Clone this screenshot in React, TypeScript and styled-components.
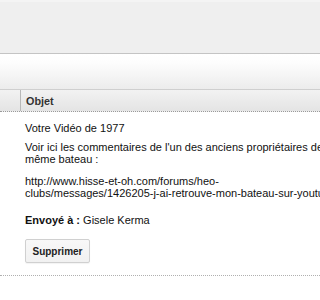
import React from "react";
import styled, { createGlobalStyle } from "styled-components";

const GlobalStyle = createGlobalStyle`
  html, body {
    margin: 0;
    padding: 0;
    background: #fff;
    font-family: "Liberation Sans", Arial, sans-serif;
    color: #111;
  }
`;

const Page = styled.div`
  width: 320px;
  height: 300px;
  overflow: hidden;
  background: #fff;
`;

const TopBand = styled.div`
  height: 51px;
  background: #efefef;
  border-top: 2px solid #f4f4f4;
`;

const Toolbar = styled.div`
  height: 35px;
  border-top: 1px solid #c4c4c4;
  border-bottom: 1px solid #cfcfcf;
  background: linear-gradient(#ffffff 0%, #fdfdfd 25%, #ececec 100%);
`;

const HeaderRow = styled.div`
  display: grid;
  grid-template-columns: 20px 1fr;
  height: 21px;
  background: linear-gradient(#f2f2f2, #e4e4e4);
  border-bottom: 1px dotted #9a9a9a;
`;

const HeaderCell = styled.div<{ $divider?: boolean }>`
  display: flex;
  align-items: center;
  padding-left: 5px;
  font-size: 10.8px;
  font-weight: bold;
  color: #333;
  border-left: ${(p) => (p.$divider ? "1px solid #b8b8b8" : "none")};
`;

const Message = styled.div`
  padding: 10px 0 12px 25px;
  border-bottom: 1px dotted #b0b0b0;
  font-size: 11px;
  line-height: 12px;
  white-space: nowrap;
`;

const Para = styled.p<{ $top?: number }>`
  margin: ${(p) => p.$top ?? 0}px 0 0;
`;

const Label = styled.span`
  font-weight: bold;
`;

const Button = styled.button`
  display: block;
  margin-top: 13px;
  font-family: "Liberation Sans", Arial, sans-serif;
  font-size: 10px;
  font-weight: bold;
  color: #222;
  width: 65px;
  height: 24px;
  padding: 0;
  background: linear-gradient(#f8f8f8, #f1f1f1);
  border: 1px solid #d0d0d0;
  border-radius: 2px;
  box-shadow: 0 1px 1px rgba(0, 0, 0, 0.05);
`;

export default function App() {
  return (
    <Page>
      <GlobalStyle />
      <TopBand />
      <Toolbar />
      <HeaderRow>
        <HeaderCell />
        <HeaderCell $divider>Objet</HeaderCell>
      </HeaderRow>
      <Message>
        <Para>Votre Vidéo de 1977</Para>
        <Para $top={7}>
          Voir ici les commentaires de l'un des anciens propriétaires de ce
          <br />
          même bateau :
        </Para>
        <Para $top={10}>
          http://www.hisse-et-oh.com/forums/heo-
          <br />
          clubs/messages/1426205-j-ai-retrouve-mon-bateau-sur-youtube
        </Para>
        <Para $top={15}>
          <Label>Envoyé à :</Label> Gisele Kerma
        </Para>
        <Button>Supprimer</Button>
      </Message>
    </Page>
  );
}
